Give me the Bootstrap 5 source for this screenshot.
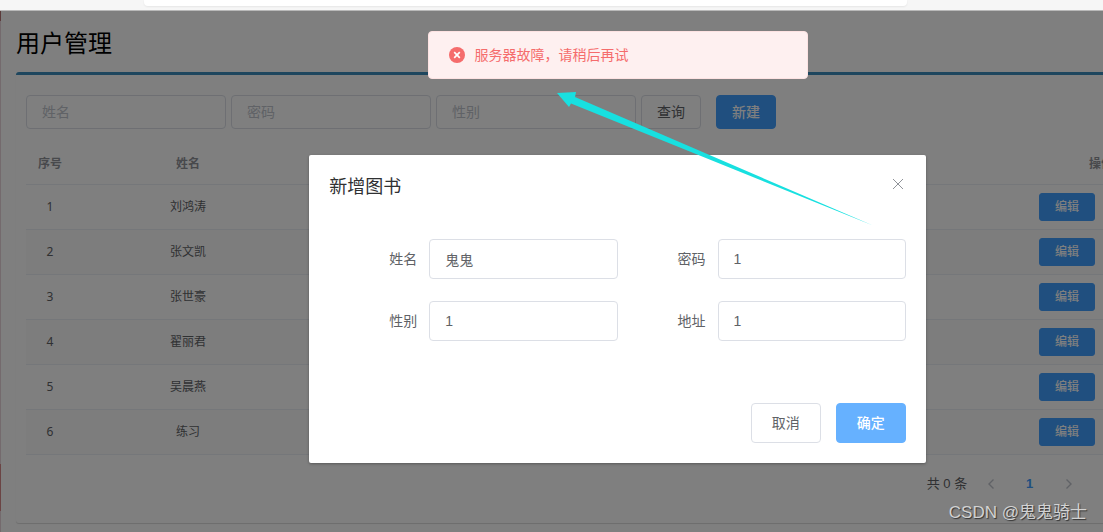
<!DOCTYPE html>
<html lang="zh-CN">
<head>
<meta charset="utf-8">
<meta name="viewport" content="width=device-width, initial-scale=1">
<title>用户管理</title>
<link href="https://cdn.jsdelivr.net/npm/bootstrap@5.3.0/dist/css/bootstrap.min.css" rel="stylesheet">
<style>
  body { font-family: "Liberation Sans", "Noto Sans CJK SC", sans-serif; font-size: 14px; line-height: 20px; color: #606266; }
  .browser-bar { height: 11px; background: #f6f6f6; border-bottom: 1px solid #b9b9b9; padding-left: 13.1%; }
  .address-box { width: 79.5%; height: 6px; background: #fff; border-radius: 0 0 4px 4px; box-shadow: 0 1px 2px #0001; }
  .edge-strip { width: 1px; background: linear-gradient(#5b3a3a 0 2%, #746a6d 2% 87%, #6b4444 87% 96%, #746a6d 96%); }
  .stage { width: 111.8%; flex: none; background: #fff; padding: 16px 9px 9px 15px; }
  .page-title { font-size: 24px; line-height: 34px; margin-bottom: 11px; color: #000; font-weight: 400; }
  .panel { border-top: 3px solid #3c8dbc; border-radius: 3px; padding: 20px 10px 25px; box-shadow: 0 1px 1px rgba(0,0,0,.15); }
  .form-control { font-size: 14px; line-height: 20px; padding: 0 15px; border-color: #dcdfe6; border-radius: 4px; color: #606266; }
  .form-control::placeholder { color: #c0c4cc; }
  .search-form { gap: 5px; }
  .search-input { width: 200px; height: 34px; }
  .btn { --bs-btn-font-size: 14px; --bs-btn-line-height: 20px; --bs-btn-padding-x: 15px; --bs-btn-padding-y: 6px; --bs-btn-border-radius: 4px; }
  .btn-plain { --bs-btn-color: #606266; --bs-btn-bg: #fff; --bs-btn-border-color: #dcdfe6; --bs-btn-hover-border-color: #409eff; --bs-btn-hover-color: #409eff; }
  .btn-main { --bs-btn-color: #fff; --bs-btn-bg: #409eff; --bs-btn-border-color: #409eff; --bs-btn-hover-bg: #66b1ff; --bs-btn-hover-color: #fff; font-weight: 500; }
  .btn-new { margin-left: 10px; }
  .btn-edit { --bs-btn-font-size: 12px; --bs-btn-line-height: 16px; --bs-btn-padding-y: 5px; --bs-btn-border-radius: 3px; }
  .btn-tall { --bs-btn-padding-x: 20px; --bs-btn-padding-y: 9px; }
  .btn-ok { --bs-btn-bg: #66b1ff; --bs-btn-border-color: #66b1ff; }
  .user-table { table-layout: fixed; margin-top: 15px; font-family: "Noto Sans", "Noto Sans CJK SC", sans-serif; font-size: 12px; line-height: 16px; text-align: center; --bs-table-color: #606266; --bs-table-border-color: #ebeef5; }
  .user-table > :not(caption) > * > * { padding: 0; height: 45px; vertical-align: middle; }
  .user-table > thead > tr > * { height: 40px; color: #909399; font-weight: 700; }
  .user-table > tbody > tr:nth-child(even) > * { background: #fafafa; }
  .user-table .col-no { width: 48px; }
  .user-table .cell-actions { text-align: left; padding-left: 52px; }
  .pager { margin: 15px 127px 0 0; font-size: 13px; line-height: 28px; }
  .page-btn { width: 39px; padding: 0; border: 0; background: none; color: #c0c4cc; font-size: 13px; line-height: 28px; text-align: center; }
  .page-btn.current { color: #409eff; font-weight: 700; }
  .mask { background: rgba(0,0,0,.5); }
  .message { width: 380px; height: 48px; margin-top: 20px; padding: 0 20px; gap: 10px; background: #fef0f0; border: 1px solid #fde2e2; border-radius: 4px; color: #f56c6c; }
  .dialog-box { width: 50%; margin-top: 76px; background: #fff; border-radius: 2px; box-shadow: 0 1px 3px rgba(0,0,0,.3); }
  .dialog-head { padding: 20px 20px 10px; }
  .dialog-title { font-size: 18px; line-height: 24px; color: #303133; font-weight: 400; }
  .dialog-close { border: 0; background: none; padding: 0 2px; color: #909399; line-height: 16px; }
  .dialog-body { padding: 30px 20px; row-gap: 22px; }
  .field-label { width: 100px; padding-right: 12px; text-align: right; flex: none; }
  .field-input { height: 40px; }
  .dialog-foot { padding: 32px 20px 20px; gap: 15px; }
  .pointer { left: 556px; top: 80px; }
  .watermark { right: 16px; bottom: 7px; font-size: 17px; line-height: 24px; color: #d2d2d2; text-shadow: 1px 1px 1px #333; }
</style>
</head>
<body class="d-flex flex-column min-vh-100 overflow-hidden">
<header class="browser-bar"><div class="address-box"></div></header>
<div class="d-flex flex-fill position-relative overflow-hidden">
  <div class="edge-strip flex-shrink-0"></div>
  <div class="stage position-relative">
    <main>
      <h1 class="page-title">用户管理</h1>
      <section class="panel">
        <form class="search-form d-flex">
          <input class="form-control search-input" type="text" placeholder="姓名" aria-label="姓名">
          <input class="form-control search-input" type="text" placeholder="密码" aria-label="密码">
          <input class="form-control search-input" type="text" placeholder="性别" aria-label="性别">
          <button class="btn btn-plain" type="button">查询</button>
          <button class="btn btn-main btn-new" type="button">新建</button>
        </form>
        <table class="table user-table mb-0">
          <thead>
            <tr><th class="col-no">序号</th><th>姓名</th><td></td><td></td><td></td><th>操作</th></tr>
          </thead>
          <tbody>
            <tr><td>1</td><td>刘鸿涛</td><td></td><td></td><td></td><td class="cell-actions"><button class="btn btn-main btn-edit" type="button">编辑</button></td></tr>
            <tr><td>2</td><td>张文凯</td><td></td><td></td><td></td><td class="cell-actions"><button class="btn btn-main btn-edit" type="button">编辑</button></td></tr>
            <tr><td>3</td><td>张世豪</td><td></td><td></td><td></td><td class="cell-actions"><button class="btn btn-main btn-edit" type="button">编辑</button></td></tr>
            <tr><td>4</td><td>翟丽君</td><td></td><td></td><td></td><td class="cell-actions"><button class="btn btn-main btn-edit" type="button">编辑</button></td></tr>
            <tr><td>5</td><td>吴晨燕</td><td></td><td></td><td></td><td class="cell-actions"><button class="btn btn-main btn-edit" type="button">编辑</button></td></tr>
            <tr><td>6</td><td>练习</td><td></td><td></td><td></td><td class="cell-actions"><button class="btn btn-main btn-edit" type="button">编辑</button></td></tr>
          </tbody>
        </table>
        <nav class="pager d-flex justify-content-end" aria-label="分页">
          <span class="me-1">共 0 条</span>
          <button class="page-btn" type="button" aria-label="上一页"><svg width="12" height="12" viewBox="0 0 12 12" fill="none" stroke="currentColor" stroke-width="1.4"><path d="M8.500 1.500 4 6l4.500 4.500"/></svg></button>
          <button class="page-btn current" type="button">1</button>
          <button class="page-btn" type="button" aria-label="下一页"><svg width="12" height="12" viewBox="0 0 12 12" fill="none" stroke="currentColor" stroke-width="1.4"><path d="M3.500 1.500 8 6l-4.500 4.500"/></svg></button>
        </nav>
      </section>
    </main>
    <div class="mask position-absolute top-0 start-0 w-100 h-100 d-flex flex-column align-items-center">
      <div class="message d-flex align-items-center" role="alert">
        <svg width="16" height="16" viewBox="0 0 16 16"><circle cx="8" cy="8" r="8" fill="#f56c6c"/><path d="m5.200 5.200 5.600 5.600m0-5.600-5.600 5.600" stroke="#fff" stroke-width="1.700"/></svg>
        <span>服务器故障，请稍后再试</span>
      </div>
      <div class="dialog-box" role="dialog" aria-labelledby="dialogTitle">
        <div class="dialog-head d-flex justify-content-between align-items-start">
          <h2 class="dialog-title mb-0" id="dialogTitle">新增图书</h2>
          <button class="dialog-close" type="button" aria-label="关闭"><svg width="12" height="12" viewBox="0 0 12 12" fill="none" stroke="currentColor"><path d="m1 1 10 10M11 1 1 11"/></svg></button>
        </div>
        <form class="dialog-body row gx-0 mx-0">
          <div class="col-6 d-flex align-items-center"><label class="field-label" for="fName">姓名</label><input class="form-control field-input" id="fName" type="text" value="鬼鬼"></div>
          <div class="col-6 d-flex align-items-center"><label class="field-label" for="fPass">密码</label><input class="form-control field-input" id="fPass" type="text" value="1"></div>
          <div class="col-6 d-flex align-items-center"><label class="field-label" for="fSex">性别</label><input class="form-control field-input" id="fSex" type="text" value="1"></div>
          <div class="col-6 d-flex align-items-center"><label class="field-label" for="fAddr">地址</label><input class="form-control field-input" id="fAddr" type="text" value="1"></div>
        </form>
        <div class="dialog-foot d-flex justify-content-end">
          <button class="btn btn-plain btn-tall" type="button">取消</button>
          <button class="btn btn-main btn-ok btn-tall" type="button">确定</button>
        </div>
      </div>
      <svg class="pointer position-absolute" width="320" height="136" viewBox="557 91 320 136" aria-hidden="true"><path d="M557 93 576 92l-1 5 298 128.500L571 103.500l-2 3.500z" fill="#18e0e0"/></svg>
    </div>
  </div>
  <div class="watermark position-absolute">CSDN @鬼鬼骑士</div>
</div>
<script src="https://cdn.jsdelivr.net/npm/bootstrap@5.3.0/dist/js/bootstrap.bundle.min.js"></script>
</body>
</html>
